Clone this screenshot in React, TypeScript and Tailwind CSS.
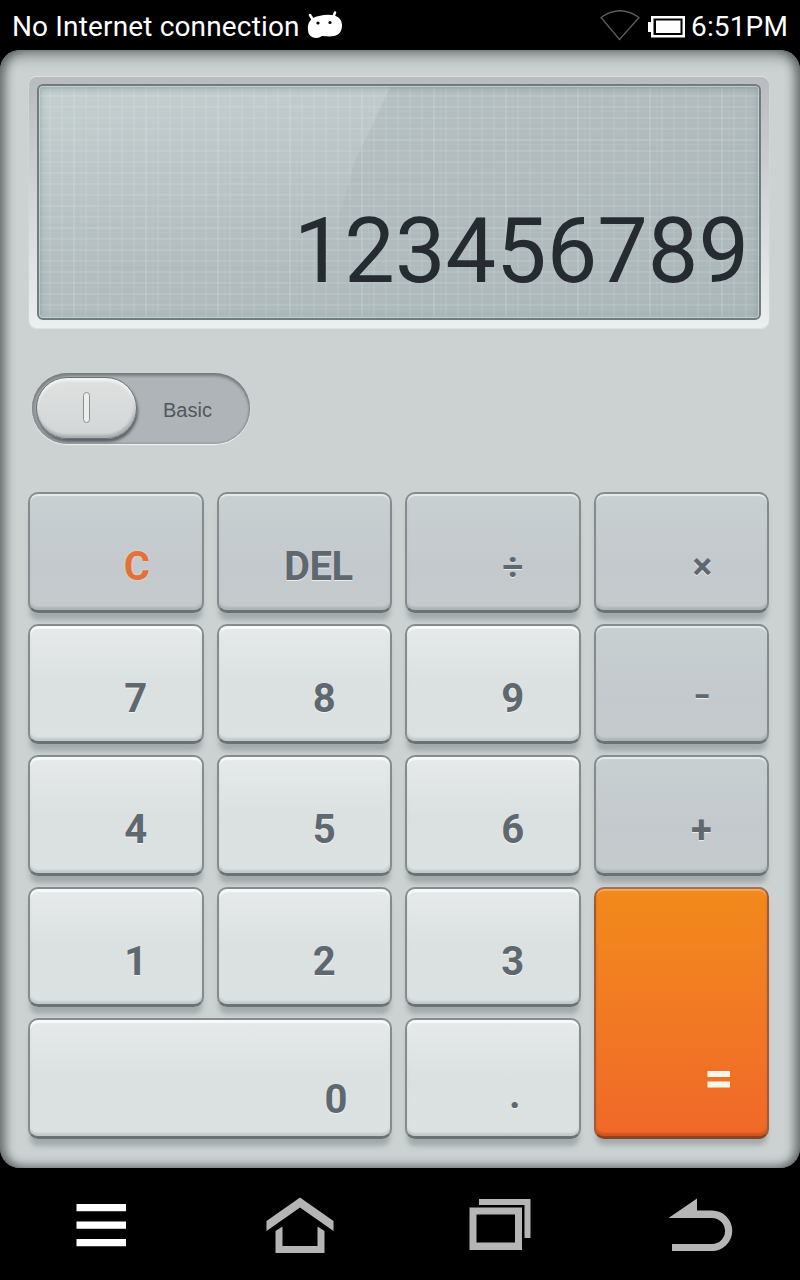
import { useState } from "react";
import clsx from "clsx";

interface KeyDef {
  label: string;
  kind: "light" | "dark";
  className?: string;
  text?: string;
}

const KEYS: KeyDef[] = [
  { label: "C", kind: "dark", text: "text-[#e4703a] left-[21px] text-[40px] [text-shadow:0_0_2px_#fbe3cf]" },
  { label: "DEL", kind: "dark", text: "left-[14px] text-[40px] tracking-[-0.5px]" },
  { label: "÷", kind: "dark", text: "left-[20px] top-0 text-[37px]" },
  { label: "×", kind: "dark", text: "left-[21px] top-0 text-[37px]" },
  { label: "7", kind: "light" },
  { label: "8", kind: "light" },
  { label: "9", kind: "light" },
  { label: "–", kind: "dark", text: "left-[20px] -top-[2px] text-[34px] scale-x-75" },
  { label: "4", kind: "light" },
  { label: "5", kind: "light" },
  { label: "6", kind: "light" },
  { label: "+", kind: "dark", text: "left-[20px] top-px text-[38px]" },
  { label: "1", kind: "light" },
  { label: "2", kind: "light" },
  { label: "3", kind: "light" },
  { label: "=", kind: "light" },
  { label: "0", kind: "light", className: "col-span-2", text: "left-[126px] top-[7px] text-[40px]" },
  { label: ".", kind: "light", text: "left-[22px] top-[2px] text-[40px]" },
];

const KEY_BASE =
  "flex items-start justify-center rounded-[10px] border-2 border-x-[#868c8d] border-t-[#868c8d] border-b-[3px] border-b-[#6a7273] pt-[49px]";

function Key({ def, onPress }: { def: KeyDef; onPress: (label: string) => void }) {
  if (def.label === "=") {
    return (
      <button
        onClick={() => onPress("=")}
        className="row-span-2 flex items-end justify-end rounded-[10px] border-2 border-b-[3px] border-x-[#a25a33] border-t-[#a6714f] border-b-[#8a4322] bg-linear-to-b from-[#f28a1b] to-[#f06829] pr-[36px] pb-[48px] shadow-[inset_0_2px_1px_#f5a660,inset_0_-3px_2px_#cf551f,0_8px_5px_-2px_rgba(90,98,100,0.35)]"
      >
        <svg width="24" height="17" viewBox="0 0 24 17" fill="#fff6ea">
          <rect x="0.5" y="0" width="22.5" height="6" />
          <rect x="0.5" y="10.5" width="22.5" height="6" />
        </svg>
      </button>
    );
  }

  return (
    <button
      onClick={() => onPress(def.label)}
      className={clsx(
        KEY_BASE,
        def.kind === "light"
          ? "bg-[linear-gradient(180deg,#e6eaea_0%,#dbe0e0_50%,#dce2e2_100%)] shadow-[inset_0_3px_1px_#f8fafa,inset_0_-3px_2px_#c3cacb,0_9px_5px_-2px_rgba(90,98,100,0.35)]"
          : "bg-[linear-gradient(180deg,#c9d0d2_0%,#c3c9cc_60%,#c5cacd_100%)] shadow-[inset_0_2px_1px_#e6ecec,inset_0_-3px_2px_#adb5b7,0_9px_5px_-2px_rgba(90,98,100,0.35)]",
        def.className
      )}
    >
      <span
        className={clsx(
          "relative leading-[47px] font-bold",
          def.text ?? "left-[20px] text-[40px]",
          def.label !== "C" && "text-[#5f676f] [text-shadow:0_1px_1px_rgba(255,255,255,0.7)]"
        )}
      >
        {def.label}
      </span>
    </button>
  );
}

function StatusBar() {
  return (
    <div className="flex h-[50px] items-center justify-between bg-black pr-3 pl-3 text-[28px] text-white">
      <div className="flex items-center gap-[7px]">
        <span className="w-[288px] pt-[4px] tracking-[0.15px] whitespace-nowrap">No Internet connection</span>
        <svg width="36" height="28" viewBox="0 0 36 28" fill="#fff">
          <path d="M1 19C0 11 5 6 12 5C20 3 29 3 33 8C37 14 35 24 27 25C23 26 19 25 15 25C10 29 1 27 1 19Z" />
          <path d="M3 4L6 9M28 1.500L26 7" stroke="#fff" strokeWidth="2.500" strokeLinecap="round" />
          <circle cx="11" cy="12" r="1.600" fill="#000" />
          <circle cx="23" cy="11.500" r="1.600" fill="#000" />
        </svg>
      </div>
      <div className="flex items-center">
        <svg width="40" height="32" viewBox="0 0 40 32" fill="none" stroke="#5c5c5c" strokeWidth="1.300">
          <path d="M1 8.500Q20 -5 39 8.500L19.500 30.500Z" />
        </svg>
        <svg className="mt-[3px] ml-[8px]" width="38" height="22" viewBox="0 0 38 22" fill="#fff">
          <rect x="0" y="6" width="4" height="10" />
          <rect x="4.250" y="1.250" width="31.500" height="19" fill="none" stroke="#fff" strokeWidth="2.500" />
          <rect x="8" y="4.500" width="24.500" height="12.500" />
        </svg>
        <span className="ml-[5px] pt-[4px] tracking-[0.15px]">6:51PM</span>
      </div>
    </div>
  );
}

function Display({ value }: { value: string }) {
  return (
    <div className="rounded-[8px] bg-linear-to-b from-[#b9bbbe] via-[#d3d6d8] to-[#eceff0] px-[8px] pt-[7px] pb-[8px] shadow-[0_1px_1px_#e0e4e4,0_-1px_1px_#dfe3e3]">
      <div className="relative h-[236px] overflow-hidden rounded-[6px] border-[2px] border-[#6f7c80] bg-[linear-gradient(160deg,#bac6c7_0%,#b2bcbf_45%,#abb6b8_100%)]">
        {/* LCD weave: a main grid plus a fainter offset one */}
        <div className="absolute inset-0 bg-[repeating-linear-gradient(90deg,transparent_0_10px,rgba(225,238,238,0.11)_10px_12px),repeating-linear-gradient(180deg,transparent_0_9px,rgba(225,238,238,0.13)_9px_11px)]" />
        <div className="absolute inset-0 bg-[repeating-linear-gradient(90deg,transparent_0_34px,rgba(225,238,238,0.07)_34px_36px,transparent_36px_41px,rgba(225,238,238,0.06)_41px_42px,transparent_42px_72px),repeating-linear-gradient(180deg,transparent_0_3px,rgba(225,238,238,0.06)_3px_4px,transparent_4px_11px)]" />
        <div className="absolute inset-0 bg-linear-to-b from-white/15 to-transparent to-80% [clip-path:polygon(0_0,352px_0,316px_75px,300px_130px,296px_190px,0_190px)]" />
        <div className="absolute inset-0 rounded-[4px] shadow-[inset_0_0_0_1px_rgba(215,228,228,0.6),inset_0_3px_5px_rgba(100,118,122,0.25),inset_0_0_7px_rgba(90,120,115,0.35)]" />
        <div className="relative flex h-full items-end justify-end pr-[10px] pb-[13px] text-[90px] leading-[106px] text-[#252b30]">
          {value}
        </div>
      </div>
    </div>
  );
}

function ModeSwitch() {
  return (
    <div className="flex h-[71px] w-[218px] items-center rounded-full bg-[#afb4b8] pl-[4px] shadow-[inset_0_3px_3px_#777f81,inset_3px_0_3px_#8d9497,inset_-1px_0_2px_#878e91,0_1px_1px_#f5f7f7]">
      <div className="mb-[2px] flex h-[62px] w-[101px] items-center justify-center rounded-full border border-[#6c7274] bg-linear-to-b from-[#dfe1e1] to-[#d3d6d6] shadow-[inset_0_3px_3px_#f2f4f4,inset_-1px_-3px_3px_#a8adaf,1px_3px_3px_#5b6265]">
        <div className="h-[31px] w-[7px] rounded-full border border-[#8c8f90] bg-[#eceeee]" />
      </div>
      <span className="ml-[26px] pt-[2px] font-['Liberation_Sans',sans-serif] text-[20px] text-[#52575b]">Basic</span>
    </div>
  );
}

function NavBar() {
  return (
    <div className="grid h-[112px] grid-cols-4 items-start bg-black">
      <svg className="mt-[36px] ml-[76px]" width="50" height="43" fill="#fff">
        <path d="M0.500 0H50V7.300H0.500ZM0.500 17.500H50V24.800H0.500ZM0.500 35H50V42.300H0.500Z" />
      </svg>
      <svg className="mt-[28px] ml-[66px]" width="68" height="58" fill="#b5b5b5">
        <path d="M34 1.500L67.500 25V35L34 11.500L0.500 35V25Z" />
        <path d="M9.500 35L16.500 30.500V50H51.500V30.500L58.500 35V57H9.500Z" />
      </svg>
      <svg className="mt-[31px] ml-[69px]" width="62" height="51" fill="#b5b5b5">
        <path d="M10 0H61.500V39H55.500V6H10Z" />
        <path fillRule="evenodd" d="M0.500 8.500H53V51H0.500ZM7.500 15.500V43.500H46V15.500Z" />
      </svg>
      <svg className="mt-[30px] ml-[68px]" width="65" height="54" fill="#b5b5b5">
        <path d="M0.500 20L29 0.500V12.500H44A20 20 0 0 1 44 53H4V46H44A13 13 0 0 0 44 20Z" />
      </svg>
    </div>
  );
}

export default function App() {
  const [value, setValue] = useState("123456789");

  const handlePress = (label: string) => {
    if (label === "C") setValue("0");
    else if (label === "DEL") setValue((v) => v.slice(0, -1) || "0");
    else if (/[0-9.]/.test(label)) setValue((v) => (v === "0" ? label : v + label).slice(0, 12));
  };

  return (
    <div className="flex h-[1280px] w-[800px] flex-col overflow-hidden bg-black font-[Roboto,sans-serif]">
      <StatusBar />
      <main className="flex h-[1118px] flex-col rounded-[20px] bg-[#ccd2d2] pt-[27px] pr-[31px] pl-[29px] shadow-[inset_0_10px_14px_-4px_rgba(60,66,68,0.5),inset_9px_0_10px_-3px_rgba(60,66,68,0.55),inset_-9px_0_10px_-3px_rgba(60,66,68,0.55),inset_0_-8px_10px_-4px_rgba(60,66,68,0.35)]">
        <Display value={value} />
        <div className="mt-[45px] ml-[3px]">
          <ModeSwitch />
        </div>
        <div className="mt-[48px] -ml-px grid h-[647px] grid-cols-4 grid-rows-5 gap-x-[13px] gap-y-[11px]">
          {KEYS.map((def) => (
            <Key key={def.label} def={def} onPress={handlePress} />
          ))}
        </div>
      </main>
      <NavBar />
    </div>
  );
}
